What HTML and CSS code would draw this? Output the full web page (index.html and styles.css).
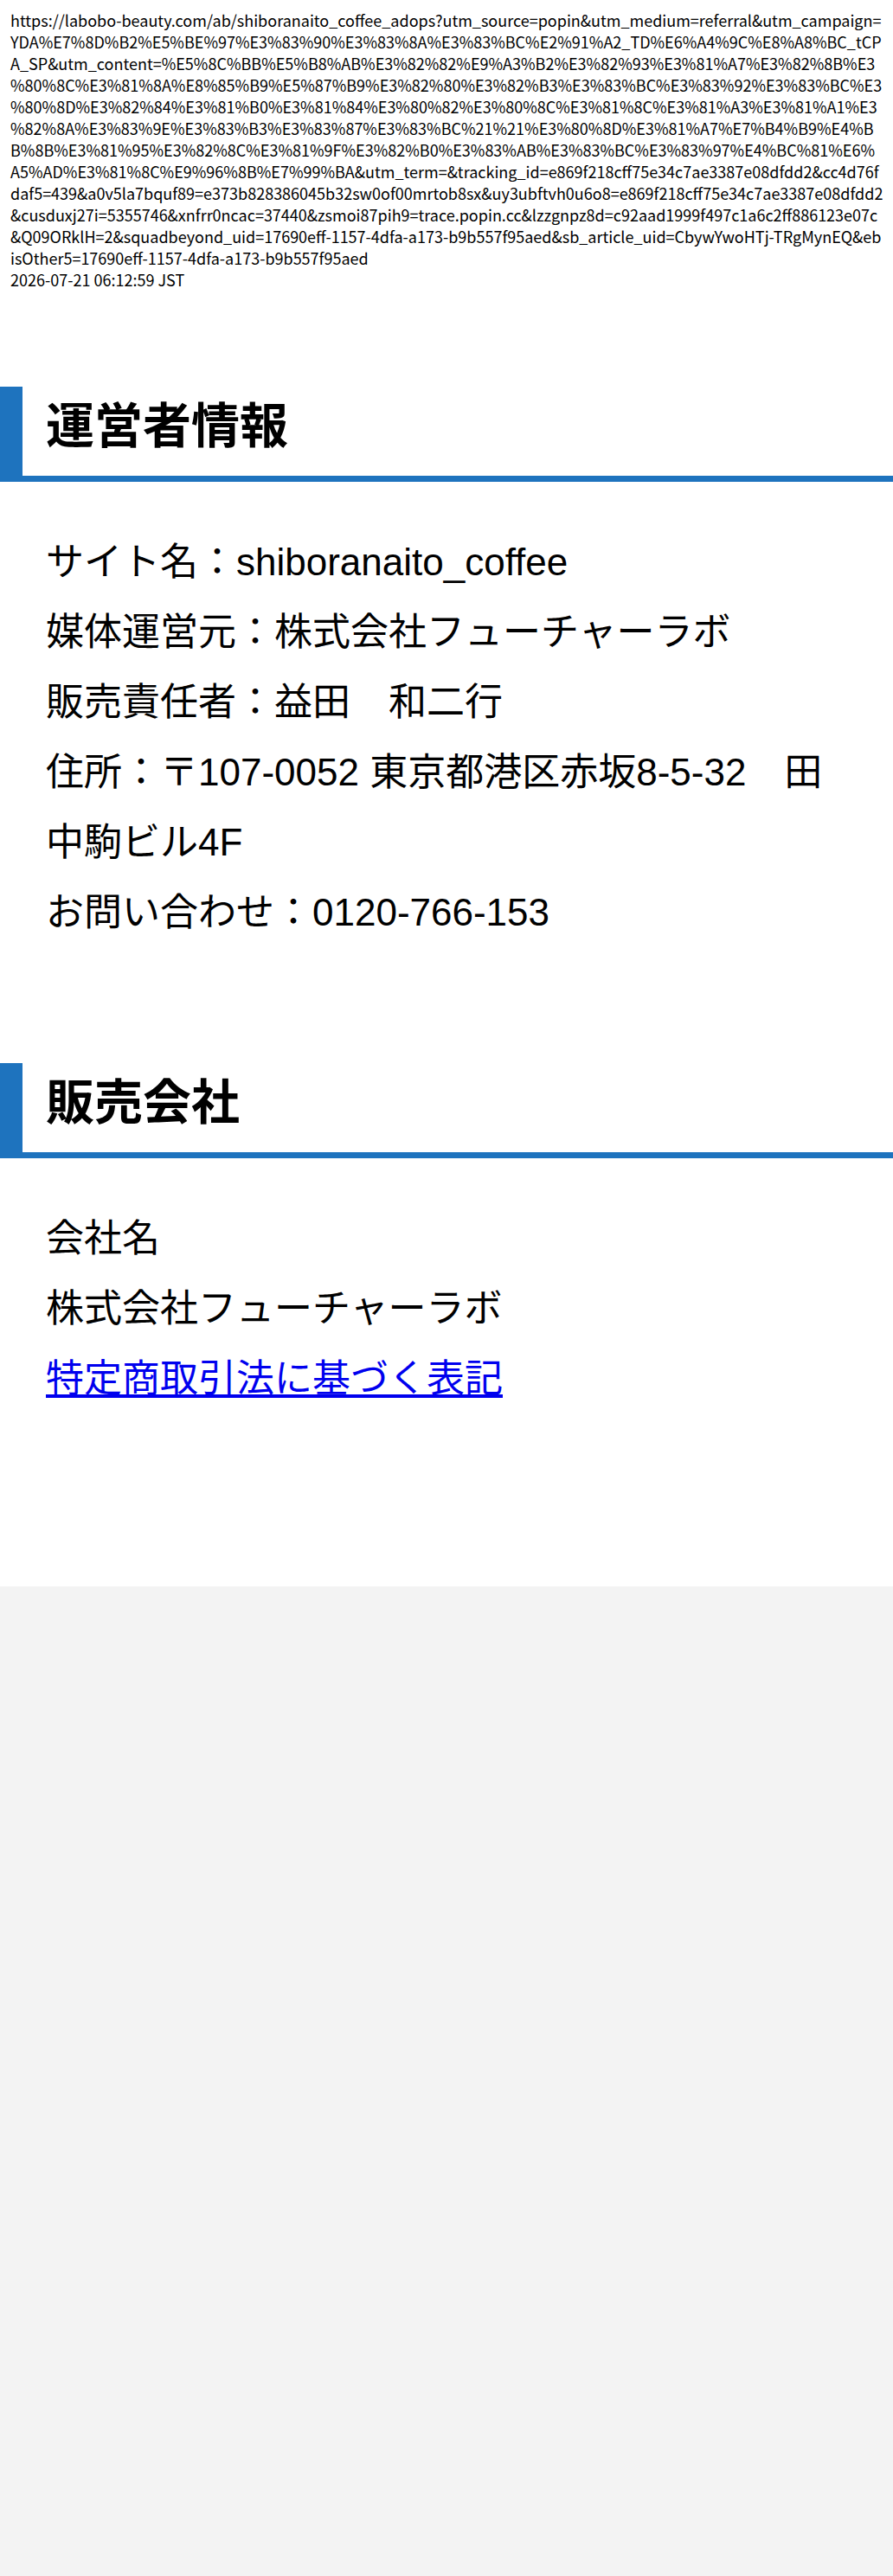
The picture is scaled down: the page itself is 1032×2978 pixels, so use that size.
FILE: index.html
```html
<!DOCTYPE html>
<html lang="ja">
<head>
    <meta charset="UTF-8">
    <meta name="viewport" content="width=device-width, initial-scale=1.0">
    <title>運営者情報</title>
    <link rel="stylesheet" href="styles.css">
</head>
<body>
    <div class="page">
        <div class="capture-info">
            <div class="capture-url">https://labobo-beauty.com/ab/shiboranaito_coffee_adops?utm_source=popin&amp;utm_medium=referral&amp;utm_campaign=<br>YDA%E7%8D%B2%E5%BE%97%E3%83%90%E3%83%8A%E3%83%BC%E2%91%A2_TD%E6%A4%9C%E8%A8%BC_tCP<br>A_SP&amp;utm_content=%E5%8C%BB%E5%B8%AB%E3%82%82%E9%A3%B2%E3%82%93%E3%81%A7%E3%82%8B%E3<br>%80%8C%E3%81%8A%E8%85%B9%E5%87%B9%E3%82%80%E3%82%B3%E3%83%BC%E3%83%92%E3%83%BC%E3<br>%80%8D%E3%82%84%E3%81%B0%E3%81%84%E3%80%82%E3%80%8C%E3%81%8C%E3%81%A3%E3%81%A1%E3<br>%82%8A%E3%83%9E%E3%83%B3%E3%83%87%E3%83%BC%21%21%E3%80%8D%E3%81%A7%E7%B4%B9%E4%B<br>B%8B%E3%81%95%E3%82%8C%E3%81%9F%E3%82%B0%E3%83%AB%E3%83%BC%E3%83%97%E4%BC%81%E6%<br>A5%AD%E3%81%8C%E9%96%8B%E7%99%BA&amp;utm_term=&amp;tracking_id=e869f218cff75e34c7ae3387e08dfdd2&amp;cc4d76f<br>daf5=439&amp;a0v5la7bquf89=e373b828386045b32sw0of00mrtob8sx&amp;uy3ubftvh0u6o8=e869f218cff75e34c7ae3387e08dfdd2<br>&amp;cusduxj27i=5355746&amp;xnfrr0ncac=37440&amp;zsmoi87pih9=trace.popin.cc&amp;lzzgnpz8d=c92aad1999f497c1a6c2ff886123e07c<br>&amp;Q09ORklH=2&amp;squadbeyond_uid=17690eff-1157-4dfa-a173-b9b557f95aed&amp;sb_article_uid=CbywYwoHTj-TRgMynEQ&amp;eb<br>isOther5=17690eff-1157-4dfa-a173-b9b557f95aed</div>
            <div class="capture-date">2026-07-21 06:12:59 JST</div>
        </div>

        <section class="block">
            <h2 class="block-title">運営者情報</h2>
            <div class="block-body">
                <p>サイト名：shiboranaito_coffee</p>
                <p>媒体運営元：株式会社フューチャーラボ</p>
                <p>販売責任者：益田　和二行</p>
                <p>住所：〒107-0052 東京都港区赤坂8-5-32　田中駒ビル4F</p>
                <p>お問い合わせ：0120-766-153</p>
            </div>
        </section>

        <section class="block block-last">
            <h2 class="block-title">販売会社</h2>
            <div class="block-body">
                <p>会社名</p>
                <p>株式会社フューチャーラボ</p>
                <p><a href="#">特定商取引法に基づく表記</a></p>
            </div>
        </section>
    </div>
</body>
</html>
```

FILE: styles.css
```css
body {
    margin: 0;
    padding: 0;
    background-color: #f3f3f3;
    color: #000;
    font-family: "Liberation Sans", "Noto Sans CJK JP", sans-serif;
}

.page {
    background-color: #fff;
    padding-bottom: 200px;
}

/* url + timestamp printed above the page */
.capture-info {
    padding: 11px 0 0 12px;
    font-family: "Noto Sans CJK JP", sans-serif;
    font-size: 18px;
    line-height: 25px;
    overflow: hidden;
}

.capture-url {
    white-space: nowrap;
}

.block {
    margin-top: 111px;
}

.block + .block {
    margin-top: 0;
}

.block-title {
    margin: 0;
    padding: 0 0 22px 27px;
    border-left: 26px solid #1e73be;
    border-bottom: 7px solid #1e73be;
    font-family: "Noto Sans CJK JP", sans-serif;
    font-size: 56px;
    font-weight: bold;
    line-height: 81px;
}

.block-body {
    padding: 52px 53px 134px;
    font-size: 44px;
    line-height: 81px;
}

.block-last .block-body {
    padding-bottom: 0;
}

.block-body p {
    margin: 0;
}

.block-body a {
    color: #0000ee;
}
```
